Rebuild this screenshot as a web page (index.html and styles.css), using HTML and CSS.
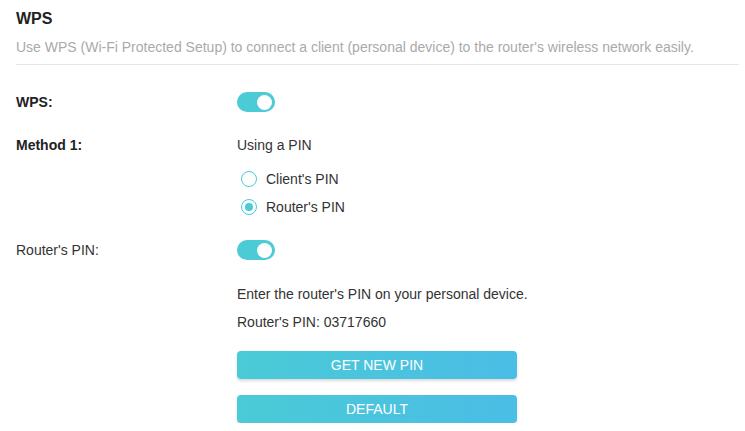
FILE: index.html
```html
<!DOCTYPE html>
<html>
<head>
<meta charset="utf-8">
<link rel="stylesheet" href="styles.css">
</head>
<body>
<div class="page">
  <div class="head">
    <h1 class="title">WPS</h1>
    <p class="desc">Use WPS (Wi-Fi Protected Setup) to connect a client (personal device) to the router's wireless network easily.</p>
  </div>
  <div class="row row-wps">
    <div class="label bold">WPS:</div>
    <div class="content"><span class="toggle on"><span class="knob"></span></span></div>
  </div>
  <div class="row row-method">
    <div class="label bold">Method 1:</div>
    <div class="content">
      <div class="text">Using a PIN</div>
      <div class="radios">
        <label class="radio"><span class="ring"></span><span>Client's PIN</span></label>
        <label class="radio checked"><span class="ring"></span><span>Router's PIN</span></label>
      </div>
    </div>
  </div>
  <div class="row row-pin">
    <div class="label">Router's PIN:</div>
    <div class="content">
      <span class="toggle on"><span class="knob"></span></span>
      <div class="text info">Enter the router's PIN on your personal device.</div>
      <div class="text pin">Router's PIN: 03717660</div>
      <div class="buttons">
        <button class="btn">GET NEW PIN</button>
        <button class="btn">DEFAULT</button>
      </div>
    </div>
  </div>
</div>
</body>
</html>
```
FILE: styles.css
```css
* { box-sizing: border-box; }
html, body { margin: 0; padding: 0; background: #fff; }
body {
  font-family: "Liberation Sans", Arial, sans-serif;
  font-size: 14px;
  color: #333;
}
.page { padding: 9px 6px 0 16px; }
.head { border-bottom: 1px solid #e6e6e6; padding-bottom: 7px; }
.title {
  margin: 0;
  font-size: 16px;
  line-height: 20px;
  font-weight: bold;
  color: #222;
}
.desc {
  margin: 8px 0 0;
  line-height: 20px;
  color: #aaa;
}
.row { display: flex; line-height: 20px; }
.label { width: 221px; flex: none; }
.bold { font-weight: bold; color: #222; }
.content { display: flex; flex-direction: column; align-items: flex-start; }
.row-wps { margin-top: 27px; }
.row-method { margin-top: 23px; }
.row-pin { margin-top: 23px; }
.toggle {
  display: inline-flex;
  align-items: center;
  justify-content: flex-end;
  width: 38px;
  height: 20px;
  border-radius: 10px;
  background: #4acbd6;
  padding: 0 3px;
}
.knob {
  width: 15px;
  height: 15px;
  border-radius: 50%;
  background: #fff;
}
.radios { display: flex; flex-direction: column; gap: 8px; margin-top: 14px; }
.radio { display: flex; align-items: center; gap: 9px; padding-left: 4px; cursor: pointer; }
.ring {
  width: 16px;
  height: 16px;
  border-radius: 50%;
  border: 1.5px solid #4acbd6;
  display: flex;
  align-items: center;
  justify-content: center;
}
.radio.checked .ring::after {
  content: "";
  width: 8px;
  height: 8px;
  border-radius: 50%;
  background: #4acbd6;
}
.info { margin-top: 24px; }
.pin { margin-top: 8px; }
.buttons { display: flex; flex-direction: column; gap: 16px; margin-top: 19px; }
.btn {
  width: 280px;
  height: 28px;
  border: none;
  border-radius: 4px;
  background: linear-gradient(90deg, #4acbd6, #4bbde6);
  color: #fff;
  font-family: "Liberation Sans", Arial, sans-serif;
  font-size: 14px;
  box-shadow: 0 2px 3px rgba(0, 0, 0, 0.15);
  padding: 0;
}
```
